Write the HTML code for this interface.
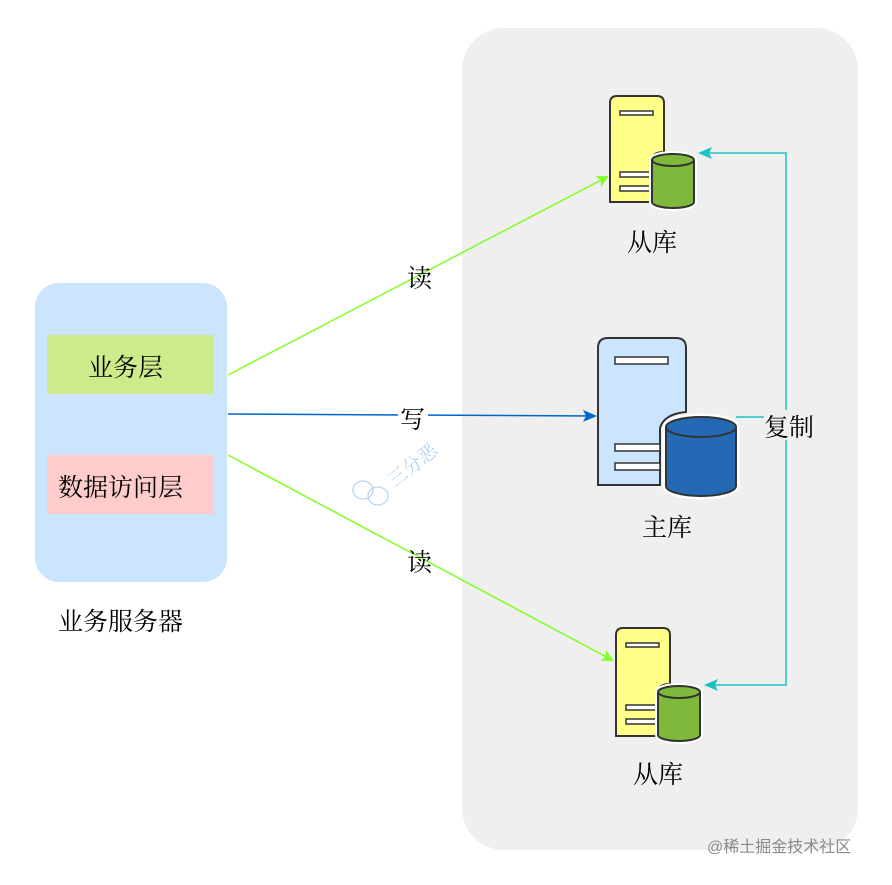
<!DOCTYPE html>
<html><head><meta charset="utf-8"><style>
body{margin:0;background:#fff;width:892px;height:880px;overflow:hidden}
svg text{font-family:"Noto Serif CJK SC","Liberation Serif",serif;font-size:25px;fill:#000}
</style></head><body>
<svg width="892" height="880" xmlns="http://www.w3.org/2000/svg">
<defs>
<marker id="ag" markerWidth="12" markerHeight="12" refX="10" refY="6" orient="auto" markerUnits="userSpaceOnUse"><path d="M0,0 L12,6 L0,12 L3,6z" fill="#80ff20"/></marker>
<marker id="ab" markerWidth="14" markerHeight="12" refX="12" refY="6" orient="auto" markerUnits="userSpaceOnUse"><path d="M0,0 L14,6 L0,12 L3,6z" fill="#0066cc"/></marker>
<marker id="ac" markerWidth="14" markerHeight="12" refX="12" refY="6" orient="auto" markerUnits="userSpaceOnUse"><path d="M0,0 L14,6 L0,12 L3,6z" fill="#19c3c3"/></marker>
</defs>
<rect x="462" y="28" width="396" height="822" rx="42" fill="#efefef"/>
<rect x="35" y="283" width="192" height="299" rx="24" fill="#cce5ff"/>
<rect x="47" y="335" width="167" height="59" fill="#cdeb8b"/>
<rect x="47" y="455" width="167" height="59" fill="#ffcccc"/>
<text x="88" y="376">业务层</text>
<text x="58" y="496">数据访问层</text>
<text x="58" y="630">业务服务器</text>

<line x1="228" y1="375" x2="607" y2="177" stroke="#80ff20" stroke-width="1.5" marker-end="url(#ag)"/>
<line x1="228" y1="455" x2="612" y2="660" stroke="#80ff20" stroke-width="1.5" marker-end="url(#ag)"/>
<line x1="228" y1="414" x2="595" y2="416" stroke="#0066cc" stroke-width="1.5" marker-end="url(#ab)"/>
<text x="407" y="287">读</text>
<rect x="398" y="405" width="30" height="28" fill="#fff"/>
<text x="400" y="428">写</text>
<text x="407" y="571">读</text>

<polyline points="736,417 786,417 786,153 700,153" fill="none" stroke="#19c3c3" stroke-width="1.5" marker-end="url(#ac)"/>
<polyline points="786,417 786,685 706,685" fill="none" stroke="#19c3c3" stroke-width="1.5" marker-end="url(#ac)"/>
<rect x="764" y="410" width="54" height="30" fill="#efefef"/>
<text x="764" y="436">复制</text>

<!-- slave1 -->
<path d="M610,202 V103 Q610,96 617,96 H657 Q664,96 664,103 V152 Q652,152 650,162 V202 Z" fill="#ffff88" stroke="#333" stroke-width="2"/>
<rect x="620" y="111" width="33" height="4" fill="#fff" stroke="#333" stroke-width="1.5"/>
<rect x="620" y="172" width="31" height="5" fill="#fff" stroke="#333" stroke-width="1.5"/>
<rect x="620" y="186" width="31" height="5" fill="#fff" stroke="#333" stroke-width="1.5"/>
<path d="M652,160 V202 A21,6 0 0 0 694,202 V160 A21,6 0 0 0 652,160" fill="#fff" stroke="#fff" stroke-width="6"/>
<path d="M652,160 V202 A21,6 0 0 0 694,202 V160" fill="#7fb93c" stroke="#333" stroke-width="2"/>
<ellipse cx="673" cy="160" rx="21" ry="6" fill="#7fb93c" stroke="#333" stroke-width="2"/>
<text x="627" y="251">从库</text>

<!-- master -->
<path d="M598,485 V348 Q598,338 608,338 H676 Q686,338 686,348 V412 Q664,414 660,428 V485 Z" fill="#cce5ff" stroke="#333" stroke-width="2"/>
<rect x="615" y="357" width="53" height="7" fill="#fff" stroke="#333" stroke-width="1.5"/>
<rect x="615" y="444" width="45" height="7" fill="#fff" stroke="#333" stroke-width="1.5"/>
<rect x="615" y="463" width="45" height="7" fill="#fff" stroke="#333" stroke-width="1.5"/>
<path d="M666,427 V486 A35,10 0 0 0 736,486 V427 A35,10 0 0 0 666,427" fill="#fff" stroke="#fff" stroke-width="7"/>
<path d="M666,427 V486 A35,10 0 0 0 736,486 V427" fill="#2469b3" stroke="#333" stroke-width="2"/>
<ellipse cx="701" cy="427" rx="35" ry="10" fill="#2469b3" stroke="#333" stroke-width="2"/>
<text x="642" y="536">主库</text>

<!-- slave2 -->
<path d="M616,736 V635 Q616,628 623,628 H663 Q670,628 670,635 V684 Q658,684 656,694 V736 Z" fill="#ffff88" stroke="#333" stroke-width="2"/>
<rect x="626" y="643" width="33" height="4" fill="#fff" stroke="#333" stroke-width="1.5"/>
<rect x="626" y="705" width="31" height="5" fill="#fff" stroke="#333" stroke-width="1.5"/>
<rect x="626" y="719" width="31" height="5" fill="#fff" stroke="#333" stroke-width="1.5"/>
<path d="M658,692 V735 A21,6 0 0 0 700,735 V692 A21,6 0 0 0 658,692" fill="#fff" stroke="#fff" stroke-width="6"/>
<path d="M658,692 V735 A21,6 0 0 0 700,735 V692" fill="#7fb93c" stroke="#333" stroke-width="2"/>
<ellipse cx="679" cy="692" rx="21" ry="6" fill="#7fb93c" stroke="#333" stroke-width="2"/>
<text x="633" y="783">从库</text>

<!-- watermark -->
<g opacity="0.6" fill="none" stroke="#8fb8e8" stroke-width="1.3">
<ellipse cx="363" cy="490" rx="10" ry="9"/><ellipse cx="378" cy="496" rx="10" ry="9"/>
</g>
<text x="0" y="0" transform="translate(394,488) rotate(-38)" style="font-size:19px;fill:#9cc2ee;opacity:.75">三分恶</text>

<text x="707" y="852" style="font-family:'Liberation Sans','Noto Sans CJK SC',sans-serif;font-size:16px;fill:#8a8a8a">@稀土掘金技术社区</text>
</svg>
</body></html>
